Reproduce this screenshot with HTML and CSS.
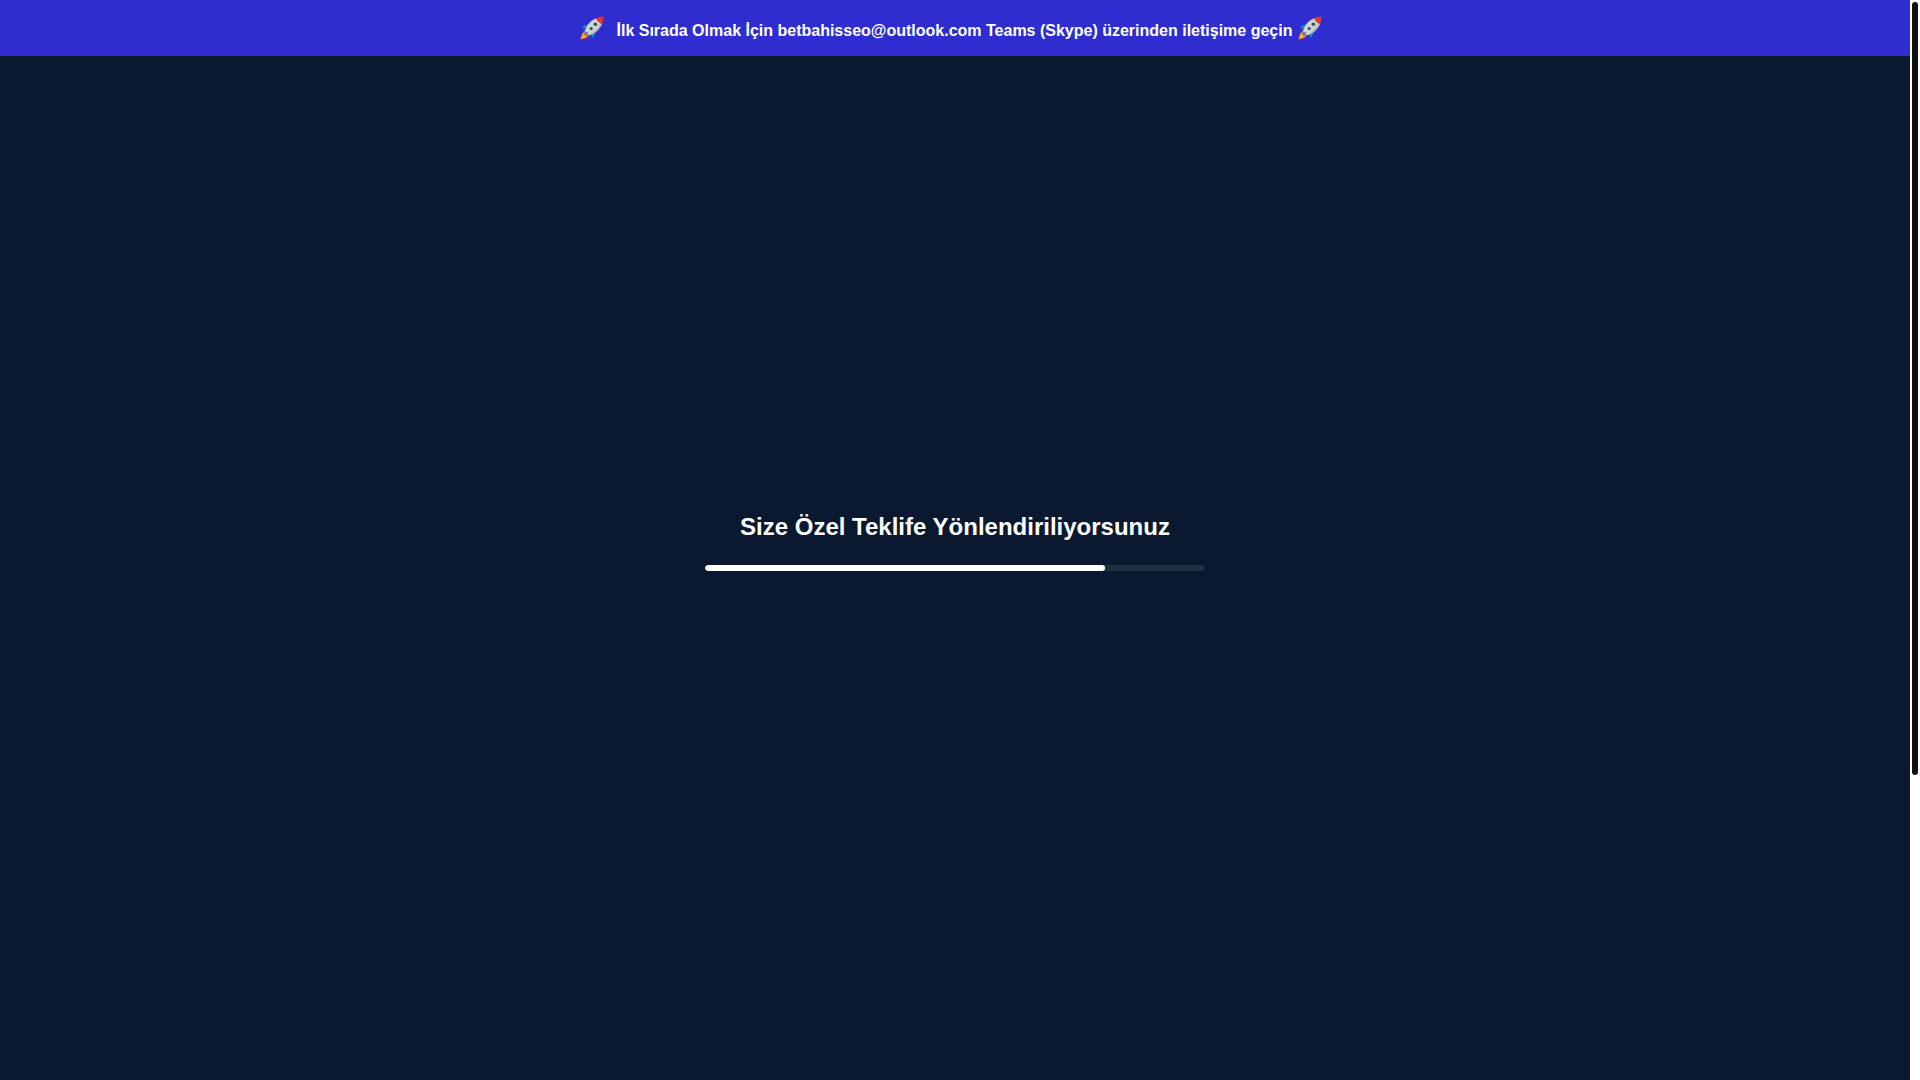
FILE: index.html
```html
<!DOCTYPE html>
<html lang="tr">
<head>
  <meta charset="UTF-8" />
  <meta name="viewport" content="width=device-width, initial-scale=1" />
  <title>Size Özel Teklife Yönlendiriliyorsunuz</title>
  <link rel="stylesheet" href="styles.css">
</head>
<body>

  <svg class="sprite" aria-hidden="true">
    <symbol id="rocket" viewBox="0 0 24 24">
      <path fill="#0f86c8" d="M9.500 8.600C6.500 8.300 3.800 9.200 1.800 11.800L7 13.200ZM15.400 14.500C15.700 17.500 14.800 20.200 12.200 22.200L10.800 17Z"/>
      <path fill="#e8701c" d="M3.800 15.600C1.800 17.300 1 19.800.5 23.500 4.200 23 6.700 22.200 8.400 20.200Z"/>
      <path fill="#fbb41a" d="M4 16.800C2.600 18.300 1.900 20.200 1.200 22.800 3.800 22.100 5.800 21.100 7.200 19.900Z"/>
      <path fill="#7c8489" d="M5 13.800L10.200 19 7.800 20.600C6 20.300 3.700 18 3.400 16.200Z"/>
      <path fill="#cfd3d4" d="M5 14.200C7.200 8.300 11 4 16.600 1.900L22.100 7.400C20 13 15.700 16.800 9.800 19 8 18.600 5.400 16 5 14.200Z"/>
      <path fill="#b4babc" d="M22.100 7.400C20 13 15.700 16.800 9.800 19L8.800 18.400C14.500 15.800 18.800 11.800 21 6.300Z"/>
      <path fill="#e5372c" d="M15.900 2.200C18.200 1 20.900.6 23.500.5 23.400 3.100 23 5.800 21.800 8.100 19.600 7.200 16.800 4.400 15.900 2.200Z"/>
      <circle cx="15.400" cy="8.300" r="1.800" fill="#35525f"/>
      <circle cx="11.200" cy="12.500" r="1.600" fill="#35525f"/>
      <path fill="none" stroke="#8d3a2a" stroke-linecap="round" d="M5.200 18.800L7.700 16.300"/>
    </symbol>
  </svg>

  <div class="page">
    <header class="banner">
      <svg class="rocket" aria-hidden="true"><use href="#rocket"/></svg>
      <p class="banner-text">İlk Sırada Olmak İçin betbahisseo@outlook.com Teams (Skype) üzerinden iletişime geçin</p>
      <svg class="rocket" aria-hidden="true"><use href="#rocket"/></svg>
    </header>

    <main class="loader">
      <h1 class="loader-title" id="loaderTitle">Size Özel Teklife Yönlendiriliyorsunuz</h1>
      <div class="progress" role="progressbar" aria-labelledby="loaderTitle" aria-valuemin="0" aria-valuemax="100" aria-valuenow="80">
        <div class="progress-fill" style="width: 80%"></div>
      </div>
    </main>
  </div>

  <div class="scroll-track" aria-hidden="true">
    <div class="scroll-thumb"></div>
  </div>

</body>
</html>
```
FILE: styles.css
```css
* {
  box-sizing: border-box;
}
body {
  margin: 0;
  display: flex;
  height: 100vh;
  overflow: hidden;
  font-family: "Liberation Sans", Arial, sans-serif;
  background-color: #0a192f;
  color: #fff;
}
.sprite {
  display: none;
}
.page {
  flex: 1;
  display: flex;
  flex-direction: column;
}
.banner {
  display: flex;
  justify-content: center;
  align-items: center;
  padding: 12px 8px 12px 0;
  background-color: #2f2dd0;
}
.banner-text {
  margin: 0;
  padding: 7px 6px 1px 13px;
  font-size: 16px;
  font-weight: bold;
  line-height: 24px;
}
.rocket {
  flex: none;
  width: 24px;
  height: 24px;
}

/* loading block */
.loader {
  flex: 1;
  display: flex;
  flex-direction: column;
  align-items: center;
  justify-content: center;
  gap: 24px;
  padding: 0 20px 52px;
}
.loader-title {
  margin: 0;
  font-size: 24px;
  line-height: 28px;
  text-align: center;
}
.progress {
  width: 100%;
  max-width: 500px;
  height: 6px;
  border-radius: 3px;
  background-color: rgba(255, 255, 255, 0.1);
  overflow: hidden;
}
.progress-fill {
  height: 100%;
  border-radius: 3px;
  background-color: #fff;
}

.scroll-track {
  width: 10px;
  padding: 2px;
  background-color: #fff;
}
.scroll-thumb {
  height: 71.8%;
  border-radius: 3px;
  background-color: #111;
}
```
